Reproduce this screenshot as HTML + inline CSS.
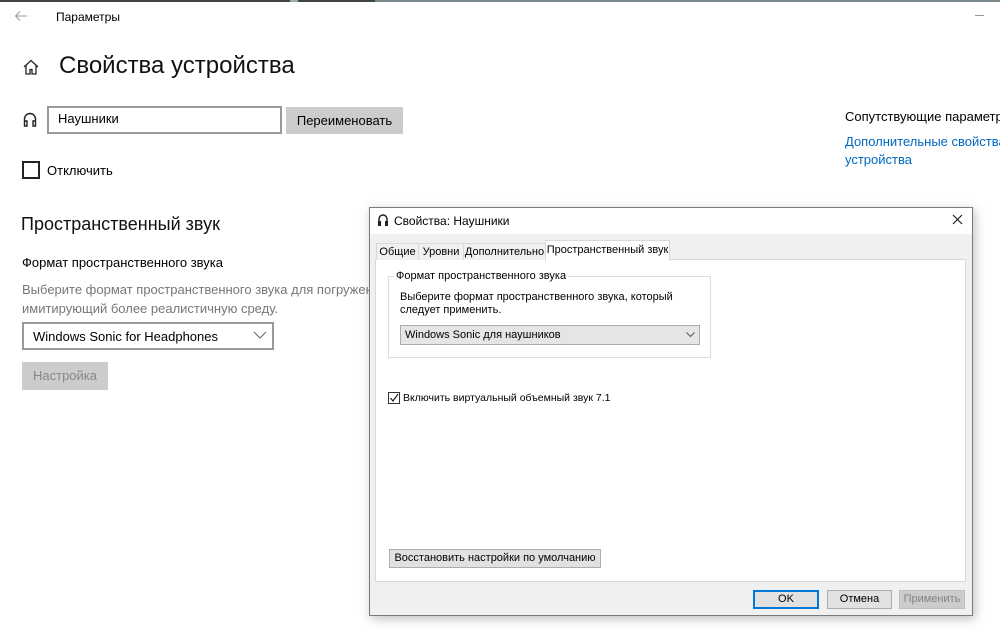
<!DOCTYPE html>
<html><head><meta charset="utf-8"><style>
*{margin:0;padding:0;box-sizing:border-box}
body{width:1000px;height:635px;background:#fff;position:relative;overflow:hidden;font-family:"Liberation Sans","DejaVu Sans",sans-serif;color:#000}
.a{position:absolute;white-space:nowrap}
.d{font-size:11px;font-family:"Liberation Sans","DejaVu Sans",sans-serif}
.btn{position:absolute;background:#e1e1e1;border:1px solid #adadad;font-size:11px;text-align:center;line-height:17px}
</style></head><body>
<div class="a" style="left:0;top:0;width:290px;height:2px;background:#444"></div>
<div class="a" style="left:290px;top:0;width:8px;height:2px;background:#9aa"></div>
<div class="a" style="left:298px;top:0;width:77px;height:2px;background:#444"></div>
<div class="a" style="left:375px;top:0;width:625px;height:2px;background:#7a8a90"></div>
<svg class="a" style="left:14px;top:10px" width="14" height="12"><path d="M13 6H2M6 1.5L1.5 6L6 10.5" stroke="#999" fill="none" stroke-width="1"/></svg>
<div class="a" style="left:56px;top:10px;font-size:12px">Параметры</div>
<div class="a" style="left:975px;top:15px;width:9px;height:1px;background:#999"></div>
<svg class="a" style="left:22px;top:58px" width="18" height="18"><path d="M2 9L9 2.5L16 9M4 7.5V16H8V11.5H10V16H14V7.5" stroke="#222" fill="none" stroke-width="1.3"/></svg>
<div class="a" style="left:59px;top:52px;font-size:24px;color:#111">Свойства устройства</div>
<svg class="a" style="left:22px;top:110px" width="16" height="18"><path d="M2.5 15V9a5.5 5.5 0 0 1 11 0v6M2.5 11h2.5v5H2.5zM11 11h2.5v5H11z" stroke="#222" fill="none" stroke-width="1.4"/></svg>
<div class="a" style="left:47px;top:106px;width:235px;height:28px;border:2px solid #999"></div>
<div class="a" style="left:58px;top:111px;font-size:13px">Наушники</div>
<div class="a" style="left:286px;top:107px;width:117px;height:27px;background:#ccc;font-size:13px;text-align:center;line-height:27px">Переименовать</div>
<div class="a" style="left:22px;top:161px;width:18px;height:18px;border:2px solid #222"></div>
<div class="a" style="left:47px;top:163px;font-size:13px">Отключить</div>
<div class="a" style="left:21px;top:214px;font-size:18px;color:#111">Пространственный звук</div>
<div class="a" style="left:22px;top:255px;font-size:13px">Формат пространственного звука</div>
<div class="a" style="left:22px;top:280px;font-size:13px;color:#777;line-height:19px">Выберите формат пространственного звука для погружени<br>имитирующий более реалистичную среду.</div>
<div class="a" style="left:22px;top:322px;width:252px;height:28px;border:2px solid #999"></div>
<div class="a" style="left:33px;top:329px;font-size:13px">Windows Sonic for Headphones</div>
<svg class="a" style="left:253px;top:331px" width="14" height="8"><path d="M1 1l6 6 6-6" stroke="#666" fill="none"/></svg>
<div class="a" style="left:22px;top:362px;width:86px;height:28px;background:#ccc;color:#888;font-size:13px;text-align:center;line-height:28px">Настройка</div>
<div class="a" style="left:845px;top:109px;font-size:13px">Сопутствующие параметры</div>
<div class="a" style="left:845px;top:133px;font-size:13px;color:#0067c0;line-height:18px">Дополнительные свойства<br>устройства</div>

<div class="a" style="left:369px;top:207px;width:604px;height:409px;background:#f0f0f0;border:1px solid #7a7a7a;box-shadow:2px 3px 10px rgba(0,0,0,.25)"></div>
<div class="a" style="left:370px;top:208px;width:602px;height:26px;background:#fff"></div>
<svg class="a" style="left:377px;top:213px" width="12" height="14"><path d="M2 9V6a4 4 0 0 1 8 0v3" stroke="#222" fill="none" stroke-width="1.5"/><rect x="1" y="8" width="3" height="5" fill="#222"/><rect x="8" y="8" width="3" height="5" fill="#222"/></svg>
<div class="a d" style="left:394px;top:214px;font-size:12px">Свойства: Наушники</div>
<svg class="a" style="left:952px;top:214px" width="11" height="11"><path d="M1 1l9 9M10 1l-9 9" stroke="#222" stroke-width="1.2"/></svg>
<div class="a" style="left:375px;top:259px;width:591px;height:323px;background:#fff;border:1px solid #d9d9d9"></div>
<div class="a d" style="left:376px;top:243px;width:43px;height:17px;border:1px solid #d9d9d9;border-bottom:none;text-align:center;line-height:16px;background:#f0f0f0">Общие</div>
<div class="a d" style="left:418px;top:243px;width:46px;height:17px;border:1px solid #d9d9d9;border-bottom:none;text-align:center;line-height:16px;background:#f0f0f0">Уровни</div>
<div class="a d" style="left:463px;top:243px;width:83px;height:17px;border:1px solid #d9d9d9;border-bottom:none;text-align:center;line-height:16px;background:#f0f0f0">Дополнительно</div>
<div class="a d" style="left:545px;top:240px;width:125px;height:21px;border:1px solid #d9d9d9;border-bottom:none;text-align:center;line-height:18px;background:#fff">Пространственный звук</div>
<div class="a" style="left:388px;top:276px;width:323px;height:82px;border:1px solid #dcdcdc"></div>
<div class="a d" style="left:394px;top:270px;background:#fff;padding:0 2px">Формат пространственного звука</div>
<div class="a d" style="left:400px;top:291px;line-height:13px">Выберите формат пространственного звука, который<br>следует применить.</div>
<div class="a" style="left:400px;top:325px;width:300px;height:20px;background:#e5e5e5;border:1px solid #adadad"></div>
<div class="a d" style="left:405px;top:329px">Windows Sonic для наушников</div>
<svg class="a" style="left:686px;top:332px" width="9" height="6"><path d="M.5 .5l4 4 4-4" stroke="#555" fill="none"/></svg>
<div class="a" style="left:388px;top:392px;width:12px;height:12px;border:1px solid #333;background:#fff"></div>
<svg class="a" style="left:389px;top:393px" width="10" height="10"><path d="M1.5 5l2.5 3 5-7" stroke="#222" fill="none" stroke-width="1.2"/></svg>
<div class="a d" style="left:403px;top:392px;font-size:10.5px">Включить виртуальный объемный звук 7.1</div>
<div class="btn" style="left:389px;top:549px;width:212px;height:19px">Восстановить настройки по умолчанию</div>
<div class="btn" style="left:753px;top:590px;width:66px;height:19px;border:2px solid #0078d7;line-height:15px">OK</div>
<div class="btn" style="left:827px;top:590px;width:65px;height:19px">Отмена</div>
<div class="btn" style="left:899px;top:590px;width:66px;height:19px;background:#ccc;border-color:#bfbfbf;color:#838383">Применить</div>
</body></html>
